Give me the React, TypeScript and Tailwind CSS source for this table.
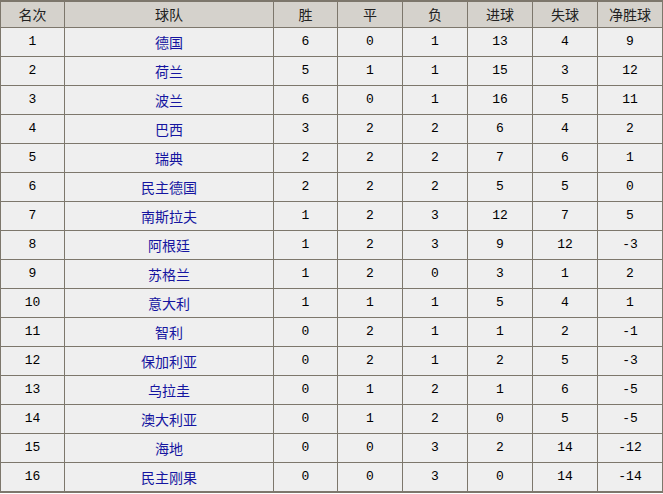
import React from 'react';

type Row = [number, string, number, number, number, number, number, number];

const rows: Row[] = [
  [1, '德国', 6, 0, 1, 13, 4, 9],
  [2, '荷兰', 5, 1, 1, 15, 3, 12],
  [3, '波兰', 6, 0, 1, 16, 5, 11],
  [4, '巴西', 3, 2, 2, 6, 4, 2],
  [5, '瑞典', 2, 2, 2, 7, 6, 1],
  [6, '民主德国', 2, 2, 2, 5, 5, 0],
  [7, '南斯拉夫', 1, 2, 3, 12, 7, 5],
  [8, '阿根廷', 1, 2, 3, 9, 12, -3],
  [9, '苏格兰', 1, 2, 0, 3, 1, 2],
  [10, '意大利', 1, 1, 1, 5, 4, 1],
  [11, '智利', 0, 2, 1, 1, 2, -1],
  [12, '保加利亚', 0, 2, 1, 2, 5, -3],
  [13, '乌拉圭', 0, 1, 2, 1, 6, -5],
  [14, '澳大利亚', 0, 1, 2, 0, 5, -5],
  [15, '海地', 0, 0, 3, 2, 14, -12],
  [16, '民主刚果', 0, 0, 3, 0, 14, -14],
];

const headers = ['名次', '球队', '胜', '平', '负', '进球', '失球', '净胜球'];

const cjk = "font-['Noto_Sans_CJK_SC',sans-serif]";
const num = "font-['Liberation_Mono','Noto_Sans_CJK_SC',monospace] text-[13px] text-black";

const App: React.FC = () => {
  return (
    <div className="w-[663px] h-[494px] bg-white">
      <div className="grid grid-cols-[63px_208px_63px_64px_64px_64px_64px_64px] grid-rows-[25px] auto-rows-[28px] gap-px bg-[#7d776c] pt-[2px] pb-[2px] px-px">
        {headers.map((h) => (
          <div key={h} className={`bg-[#d5d2cc] flex items-center justify-center text-[14px] text-[#222] ${cjk}`}>
            {h}
          </div>
        ))}
        {rows.map((r) => (
          <React.Fragment key={r[0]}>
            <div className={`bg-[#efefef] flex items-center justify-center ${num}`}>{r[0]}</div>
            <div className={`bg-[#efefef] flex items-center justify-center text-[14px] text-[#1515a0] ${cjk}`}>{r[1]}</div>
            {r.slice(2).map((v, i) => (
              <div key={i} className={`bg-[#efefef] flex items-center justify-center ${num}`}>
                {v < 0 ? `-${Math.abs(v)}` : v}
              </div>
            ))}
          </React.Fragment>
        ))}
      </div>
    </div>
  );
};

export default App;
